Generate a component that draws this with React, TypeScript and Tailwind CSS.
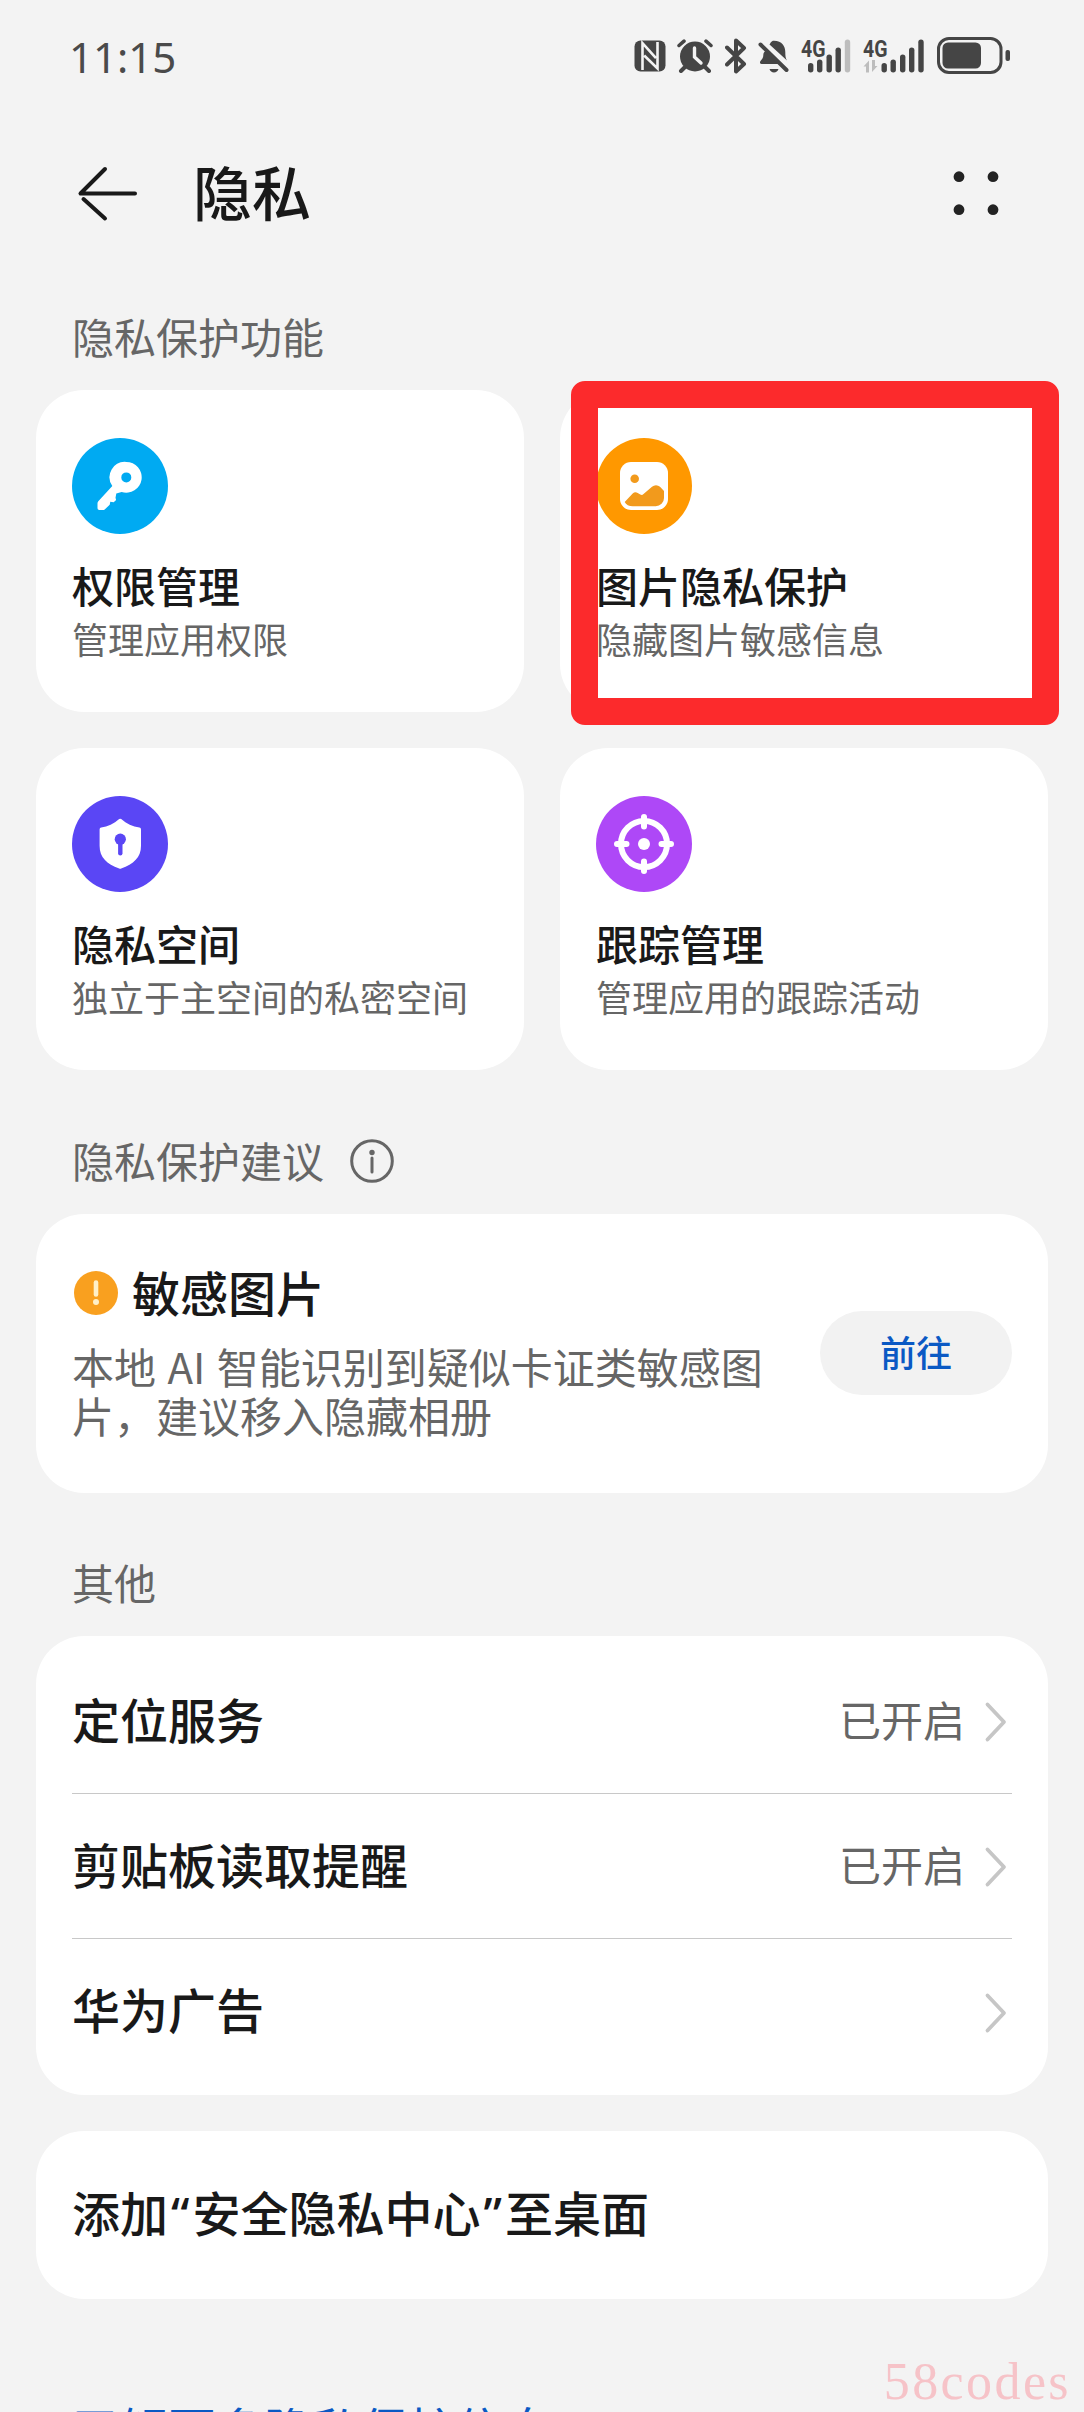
import type { ReactNode } from "react";
import clsx from "clsx";

type Feature = {
  id: string;
  title: string;
  desc: string;
  color: string;
  icon: ReactNode;
  highlighted?: boolean;
};

const features: Feature[] = [
  {
    id: "permission",
    title: "权限管理",
    desc: "管理应用权限",
    color: "bg-[#00aaf2]",
    icon: (
      <path
        fillRule="evenodd"
        fill="#fff"
        d="M54.3 23.9a15.4 15.4 0 1 1-4.6 30.1l-5.4 1.6-.8 4.2 .6 2.2-2.4 2.2-3.4-.4-.6 3-5 4.6a2.5 2.5 0 0 1-1.8.6h-3.6a1.8 1.8 0 0 1-1.8-1.8v-5a3 3 0 0 1 .8-2L40.3 48A15.4 15.4 0 0 1 54.3 23.9zM54.3 34.4a5 5 0 1 0 0 10a5 5 0 1 0 0-10z"
      />
    ),
  },
  {
    id: "image",
    title: "图片隐私保护",
    desc: "隐藏图片敏感信息",
    color: "bg-[#ff9800]",
    highlighted: true,
    icon: (
      <>
        <rect x="24" y="24" width="48" height="48" rx="11" fill="#fff" />
        <circle cx="38.7" cy="40.7" r="4.3" fill="#f29a1c" />
        <path
          fill="#f29a1c"
          d="M28.7 64l8-8.4a4.2 4.2 0 0 1 5-.6l2.6 1.6a2.6 2.6 0 0 0 3.2-.5L56 48.8a6 6 0 0 1 8 0l4 4.2V60a8.3 8.3 0 0 1-8.3 8.3H36.8c-3.8 0-6.8-1.6-8.1-4.3z"
        />
      </>
    ),
  },
  {
    id: "space",
    title: "隐私空间",
    desc: "独立于主空间的私密空间",
    color: "bg-[#5a46f5]",
    icon: (
      <>
        <path
          fill="#fff"
          d="M47.2 23a1.8 1.8 0 0 1 2 0c5.4 4.7 11.4 7.6 18.2 8.6a1.8 1.8 0 0 1 1.6 1.8v16.3c0 12-7.4 18-19.8 22.8a2.6 2.6 0 0 1-2 0C34.8 67.7 27.6 61.7 27.6 49.7V33.4a1.8 1.8 0 0 1 1.6-1.8c6.6-1 12.6-3.9 18-8.6z"
        />
        <circle cx="48.3" cy="43.2" r="5.6" fill="#5a46f5" />
        <path d="M48.3 45v12.2" stroke="#5a46f5" strokeWidth="4.4" strokeLinecap="round" />
      </>
    ),
  },
  {
    id: "tracking",
    title: "跟踪管理",
    desc: "管理应用的跟踪活动",
    color: "bg-[#ae48f7]",
    icon: (
      <>
        <g fill="none" stroke="#fff" strokeWidth="6">
          <circle cx="48" cy="48" r="23" />
          <path strokeLinecap="round" d="M48 21v9.5M48 65.5V75M21 48h9.5M65.5 48H75" />
        </g>
        <circle cx="48" cy="48" r="6" fill="#fff" />
      </>
    ),
  },
];

const rows = [
  { label: "定位服务", value: "已开启" },
  { label: "剪贴板读取提醒", value: "已开启" },
  { label: "华为广告", value: "" },
];

const signalBars = [
  { x: 7, y: 24 },
  { x: 16, y: 20.5 },
  { x: 25.5, y: 15.5 },
  { x: 34.5, y: 8.5 },
  { x: 43.8, y: 0.5 },
];

function Signal({ weak = false, data = false }: { weak?: boolean; data?: boolean }) {
  const shift = data ? 11.5 : 0;
  return (
    <svg
      className="overflow-visible"
      width={data ? 62 : 50}
      height="36"
      viewBox={data ? "0 0 62 36" : "0 0 50 36"}
      fill="#454545"
    >
      <text
        x="0"
        y="18.5"
        textLength="24.5"
        lengthAdjust="spacingAndGlyphs"
        className="font-['Roboto',sans-serif] text-[24px] font-bold"
      >
        4G
      </text>
      {signalBars.map((bar, i) => (
        <rect
          key={bar.x}
          x={bar.x + shift}
          y={bar.y + 1}
          width="5.4"
          height={33.5 - bar.y}
          rx="2.7"
          fill={weak && i === 4 ? "#bdbdbd" : "#454545"}
        />
      ))}
      {data && <path d="M0.5 28.5l5.5-6v12H3v-6zM14.5 28l-5.5 6V22h3v6z" fill="#bdbdbd" />}
    </svg>
  );
}

function StatusBar() {
  return (
    <header className="flex h-28 items-center pr-[73px] pl-[69px]">
      <span className="pt-0.5 font-['Noto_Sans',sans-serif] text-[42px] leading-none text-[#4a4a4a]">11:15</span>

      <div className="ml-auto flex items-center">
        {/* NFC */}
        <svg width="32" height="32" viewBox="0 0 32 32">
          <rect x="0.5" y="0.5" width="31" height="31" rx="6" fill="#454545" />
          <path
            d="M8.5 30V3.2L22 18.2M10.2 15.5L23.5 28.5V2"
            fill="none"
            stroke="#f3f3f3"
            strokeWidth="2.6"
          />
        </svg>
        {/* Alarm */}
        <svg className="ml-[11px]" width="36" height="34" viewBox="0 0 36 34" fill="none" strokeLinecap="round">
          <circle cx="18" cy="17.5" r="15" fill="#454545" />
          <path d="M7.5 28.5L4 32M28.5 28.5L32 32" stroke="#454545" strokeWidth="4" />
          <path d="M2 6.5L7 2.2M34 6.5L29 2.2" stroke="#454545" strokeWidth="3.5" />
          <path d="M17.5 9v9l6.5 6" stroke="#f3f3f3" strokeWidth="3.4" />
        </svg>
        {/* Bluetooth */}
        <svg className="ml-3" width="22" height="36" viewBox="0 0 22 36" fill="none">
          <path
            d="M2 9.5l17 16.5-8 7.5V2.5l8 7.5L2 26.5"
            stroke="#454545"
            strokeWidth="4"
            strokeLinecap="round"
            strokeLinejoin="round"
          />
        </svg>
        {/* Muted bell */}
        <svg className="ml-[11px]" width="32" height="36" viewBox="0 0 32 36">
          <path
            fill="#454545"
            d="M8.5 12L22.5 26H3.5c-1.6 0-2-1.7-1-2.9C4.3 21 5.3 19.5 5.3 17c0-2 1.2-3.5 3.2-5zM11.5 6.5c1-1.2 1.4-3.8 4.5-3.8 8 0 11.3 5.6 11.3 11.2 0 3.5.2 6 1.7 8.6zM11.5 31h9c-.7 2.2-2.3 3.5-4.5 3.5S12.2 33.2 11.5 31z"
          />
          <path d="M2.5 6.5L28.5 32" stroke="#454545" strokeWidth="4" strokeLinecap="round" />
        </svg>
        <div className="ml-[11px] flex items-center gap-3">
          <Signal weak />
          <Signal data />
        </div>
        {/* Battery */}
        <svg className="ml-3" width="74" height="38" viewBox="0 0 74 38">
          <rect x="1.5" y="1.5" width="62.5" height="34" rx="10.5" fill="none" stroke="#454545" strokeWidth="3" />
          <rect x="5.5" y="5.5" width="38.5" height="26" rx="5.5" fill="#454545" />
          <rect x="68.5" y="13" width="4.5" height="11" rx="2" fill="#454545" />
        </svg>
      </div>
    </header>
  );
}

function SectionLabel({ className, children }: { className?: string; children: ReactNode }) {
  return (
    <div className={clsx("mb-6 flex h-[60px] items-center px-9 pb-0.5 text-[42px] text-[#666]", className)}>
      {children}
    </div>
  );
}

function Chevron() {
  return (
    <svg className="mr-1 ml-[19px] mt-0.5" width="24" height="42" viewBox="0 0 24 42" fill="none">
      <path
        d="M3.5 3.5L20 21L3.5 38.5"
        stroke="#c6c6c6"
        strokeWidth="3.8"
        strokeLinecap="round"
        strokeLinejoin="round"
      />
    </svg>
  );
}

function FeatureCard({ title, desc, color, icon, highlighted }: Feature) {
  return (
    <div className="relative h-[322px] rounded-[48px] bg-white px-9 pt-12">
      <div className={clsx("size-24 rounded-full", color)}>
        <svg width="96" height="96" viewBox="0 0 96 96">
          {icon}
        </svg>
      </div>
      <h3 className="mt-[23px] text-[42px] leading-[56px] font-medium whitespace-nowrap text-[#191919]">{title}</h3>
      <p className="text-[36px] leading-[51px] whitespace-nowrap text-[#666]">{desc}</p>
      {highlighted && (
        <div className="absolute top-[-9px] left-[11px] h-[344px] w-[488px] rounded-[14px] border-[27px] border-[#fc2a2c]" />
      )}
    </div>
  );
}

export default function App() {
  return (
    <div className="relative h-[2412px] w-[1084px] overflow-hidden bg-[#f3f3f3] font-['Noto_Sans_CJK_SC',sans-serif]">
      <StatusBar />

      {/* Title bar */}
      <div className="flex h-[164px] items-center pr-[85px] pl-[75px]">
        <svg width="66" height="56" viewBox="0 0 66 56" fill="none" stroke="#191919" strokeWidth="4" strokeLinecap="round">
          <path d="M30 3L5.5 27.5H60" strokeLinejoin="round" />
          <path d="M8.5 33L30 52.5" />
        </svg>
        <h1 className="ml-[52px] pb-[7px] text-[59px] leading-none font-medium text-[#191919]">隐私</h1>
        <svg className="ml-auto" width="46" height="46" viewBox="0 0 46 46" fill="#222">
          <circle cx="6" cy="5.7" r="5.4" />
          <circle cx="40" cy="5.7" r="5.4" />
          <circle cx="6" cy="38.7" r="5.4" />
          <circle cx="40" cy="38.7" r="5.4" />
        </svg>
      </div>

      <main className="px-9">
        <SectionLabel className="mt-[30px]">隐私保护功能</SectionLabel>
        <div className="grid grid-cols-2 gap-9">
          {features.map((feature) => (
            <FeatureCard key={feature.id} {...feature} />
          ))}
        </div>

        <SectionLabel className="mt-[60px]">
          隐私保护建议
          <svg
            className="mt-1 ml-[26px]"
            width="44"
            height="44"
            viewBox="0 0 44 44"
            fill="none"
            stroke="#666"
            strokeWidth="3"
          >
            <circle cx="22" cy="22" r="20.3" />
            <circle cx="22" cy="13.5" r="2.7" fill="#666" stroke="none" />
            <path d="M22 19v14" strokeLinecap="round" />
          </svg>
        </SectionLabel>
        <div className="flex h-[279px] items-center rounded-[48px] bg-white px-9">
          <div className="w-[700px] pb-2">
            <div className="flex items-center">
              <svg className="ml-0.5" width="44" height="44" viewBox="0 0 44 44">
                <circle cx="22" cy="22" r="22" fill="#f9a01f" />
                <path d="M22 11.5v12" stroke="#fff0c8" strokeWidth="4.6" strokeLinecap="round" />
                <circle cx="22" cy="31" r="3" fill="#fff0c8" />
              </svg>
              <h2 className="ml-[14px] pb-1 text-[48px] leading-[60px] font-medium text-[#191919]">敏感图片</h2>
            </div>
            <p className="mt-4 text-[42px] leading-[49px] [word-spacing:2px] text-[#666]">
              本地 AI 智能识别到疑似卡证类敏感图片，建议移入隐藏相册
            </p>
          </div>
          <button className="mb-0.5 ml-auto h-[84px] w-48 rounded-full bg-[#f2f2f2] pb-1 text-[36px] font-medium text-[#0a59c4]">
            前往
          </button>
        </div>

        <SectionLabel className="mt-[59px]">其他</SectionLabel>
        <div className="rounded-[48px] bg-white px-9 pt-[13px] pb-[11px]">
          {rows.map((row) => (
            <div key={row.label} className="flex h-[145px] items-center border-b border-[#c8c8c8] last:border-0">
              <span className="pb-[7px] text-[48px] leading-none font-medium text-[#191919]">{row.label}</span>
              <span className="ml-auto pb-1 text-[42px] leading-none text-[#666]">{row.value}</span>
              <Chevron />
            </div>
          ))}
        </div>

        <div className="mt-9 flex h-[168px] items-center rounded-[48px] bg-white px-9 pb-1.5 text-[48px] font-medium text-[#191919]">
          <p>
            添加<span className="px-[3px] font-['Noto_Sans',sans-serif]">“</span>安全隐私中心
            <span className="px-[3px] font-['Noto_Sans',sans-serif]">”</span>至桌面
          </p>
        </div>

        <a className="mt-24 block px-9 text-[48px] leading-[64px] text-[#0a59c4]">了解更多隐私保护信息</a>
      </main>

      {/* Watermark */}
      <span className="absolute top-[2352px] right-[13px] font-['Liberation_Serif',serif] text-[52px] leading-[60px] tracking-[2.4px] text-[#f6c3c8]">
        58codes
      </span>
    </div>
  );
}
